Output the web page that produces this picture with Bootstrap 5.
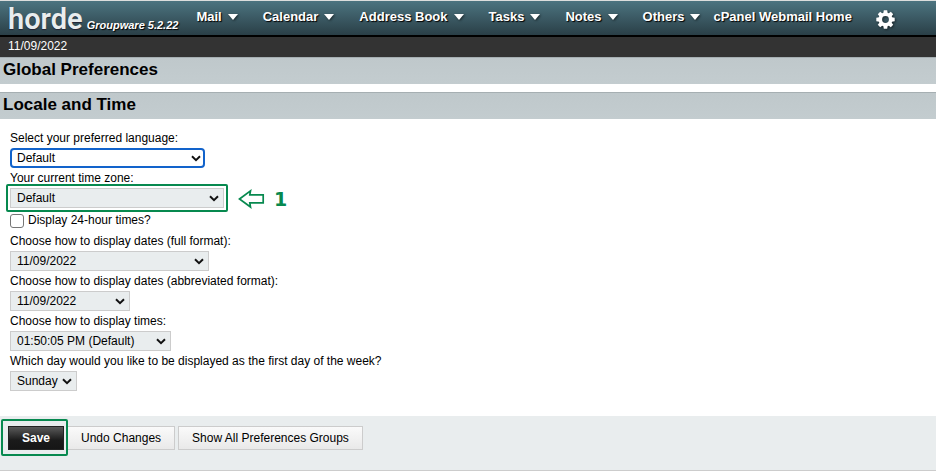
<!DOCTYPE html>
<html lang="en">
<head>
<meta charset="utf-8">
<meta name="viewport" content="width=device-width, initial-scale=1">
<title>Global Preferences</title>
<link href="https://cdn.jsdelivr.net/npm/bootstrap@5.3.0/dist/css/bootstrap.min.css" rel="stylesheet">
<style>
  body { font: 12px/20px "Liberation Sans", Arial, sans-serif; color: #000; background: #fff; }
  .topbar { height: 37px; border-top: 1px solid #dcdedd; border-bottom: 2px solid #000; background: linear-gradient(#4c7480, #2a3f47); }
  .topbar a { color: #fff; text-decoration: none; text-shadow: 1px 1px 1px #000; }
  .topbar .brand-name { font: 600 29px/36px Roboto, sans-serif; color: #e9edee; text-shadow: 0 1px 1px #223; }
  .brand-version { font: italic bold 11px/14px "Liberation Sans", Arial, sans-serif; padding-top: 17px; margin-left: 4px; }
  .menu { margin-left: 18px; gap: 25px; font-weight: bold; font-size: 13px; line-height: 18px; padding-bottom: 2px; }
  .menu a { gap: 6px; }
  .menu svg, .gear { filter: drop-shadow(1px 1px 1px #0008); }
  .menu .home-link { margin-left: -12px; }
  .menu .gear-link { margin-left: -2px; }
  .datebar { background: #333; color: #fff; height: 20px; padding-left: 8px; line-height: 18px; }
  .section-title { font-size: 17px; font-weight: bold; line-height: 24px; margin: 0 0 8px; padding: 0 3px 2px; background: linear-gradient(#bfc8cb, #c3cccf); border-top: 1px solid #a6afb2; }
  .prefs { padding: 1px 10px 25px; }
  .prefs .form-select { width: auto; height: 20px; padding: 0 16px 0 6px; font-size: 12px; line-height: 18px; color: #000; border: 1px solid #ccc; border-radius: 0; background-color: #e9edee;
    background-image: url("data:image/svg+xml,%3Csvg xmlns='http://www.w3.org/2000/svg' viewBox='0 0 10 7'%3E%3Cpath d='M1 1.3 5 5.1 9 1.3' fill='none' stroke='%23111' stroke-width='2'/%3E%3C/svg%3E");
    background-size: 10px 7px; background-position: right 4px center; }
  .prefs .form-select.is-active { border: 2px solid #1263cb; border-radius: 4px; background-color: #fff; padding-left: 5px; line-height: 16px; background-position: right 2px center; }
  .prefs .w-lang { width: 195px; }
  .prefs .w-zone { width: 214px; }
  .prefs .w-full { width: 199px; }
  .prefs .w-abbr { width: 120px; }
  .prefs .w-time { width: 161px; }
  .prefs .w-day { width: 67px; }
  .callout { position: relative; }
  .callout::after { content: ""; position: absolute; inset: -4px; border: 2px solid #07894f; border-radius: 2px; pointer-events: none; }
  .callout-save::after { inset: -7px -4px -6px -7px; z-index: 1; }
  .step { color: #07894f; height: 22px; margin: 0 0 -2px 14px; gap: 9px; font: bold 19px/22px "DejaVu Sans", sans-serif; }
  .check-row { height: 23px; line-height: 24px; }
  .prefs .form-check-input { width: 14px; height: 14px; margin: 6px 4px 0 0; border: 1px solid #767676; border-radius: 3px; }
  .actions { background: #e9edee; border-bottom: 1px solid #ccc; padding: 10px 8px 20px; gap: 3px; }
  .actions .btn { --bs-btn-padding-y: 0; --bs-btn-padding-x: 13px; --bs-btn-font-size: 12px; --bs-btn-line-height: 22px; --bs-btn-border-radius: 0; --bs-btn-color: #000; --bs-btn-border-color: #ccc; background-image: linear-gradient(#fafafa, #e9e9e9); }
  .actions .btn-save { --bs-btn-color: #fff; --bs-btn-border-color: #222; --bs-btn-font-weight: bold; background-image: linear-gradient(#5a5a5a, #1b1b1b 60%, #161616); }
</style>
<script src="https://cdn.jsdelivr.net/npm/bootstrap@5.3.0/dist/js/bootstrap.bundle.min.js"></script>
</head>
<body>
<header>
  <nav class="topbar d-flex ps-2" aria-label="Applications">
    <a class="d-flex" href="#"><span class="brand-name">horde</span><span class="brand-version">Groupware 5.2.22</span></a>
    <div class="menu d-flex align-items-center text-nowrap">
      <a class="d-flex align-items-center" href="#">Mail <svg width="10" height="6"><path d="M0 0h10L5 6z" fill="#fff"/></svg></a>
      <a class="d-flex align-items-center" href="#">Calendar <svg width="10" height="6"><path d="M0 0h10L5 6z" fill="#fff"/></svg></a>
      <a class="d-flex align-items-center" href="#">Address Book <svg width="10" height="6"><path d="M0 0h10L5 6z" fill="#fff"/></svg></a>
      <a class="d-flex align-items-center" href="#">Tasks <svg width="10" height="6"><path d="M0 0h10L5 6z" fill="#fff"/></svg></a>
      <a class="d-flex align-items-center" href="#">Notes <svg width="10" height="6"><path d="M0 0h10L5 6z" fill="#fff"/></svg></a>
      <a class="d-flex align-items-center" href="#">Others <svg width="10" height="6"><path d="M0 0h10L5 6z" fill="#fff"/></svg></a>
      <a class="home-link" href="#">cPanel Webmail Home</a>
      <a class="gear-link d-flex pt-1" href="#" aria-label="Settings">
        <svg class="gear" width="20" height="19" viewBox="-10.5 -9.5 20 19"><circle r="5.2" fill="none" stroke="#fff" stroke-width="3.6"/><g fill="#fff"><path id="tooth" d="M-2.2-6 -1.7-9.2H1.7L2.2-6z"/><use href="#tooth" transform="rotate(45)"/><use href="#tooth" transform="rotate(90)"/><use href="#tooth" transform="rotate(135)"/><use href="#tooth" transform="rotate(180)"/><use href="#tooth" transform="rotate(225)"/><use href="#tooth" transform="rotate(270)"/><use href="#tooth" transform="rotate(315)"/></g></svg>
      </a>
    </div>
  </nav>
  <div class="datebar">11/09/2022</div>
</header>
<main>
  <h1 class="section-title">Global Preferences</h1>
  <form>
    <h2 class="section-title">Locale and Time</h2>
    <div class="prefs">
      <label class="d-block" for="lang">Select your preferred language:</label>
      <select class="form-select is-active w-lang" id="lang"><option>Default</option></select>
      <label class="d-block" for="zone">Your current time zone:</label>
      <div class="d-flex">
        <div class="callout"><select class="form-select w-zone" id="zone"><option>Default</option></select></div>
        <div class="step d-flex align-items-center">
          <svg width="27" height="20" viewBox="0 0 27 20" fill="none" stroke="#07894f" stroke-width="1.7" aria-hidden="true"><path d="M1.5 10 12.5 1.9 11.8 5.9H25.2V13.9H11.8L12.5 18z"/></svg>
          <span>1</span>
        </div>
      </div>
      <div class="check-row d-flex">
        <input class="form-check-input" type="checkbox" id="h24">
        <label for="h24">Display 24-hour times?</label>
      </div>
      <label class="d-block" for="full">Choose how to display dates (full format):</label>
      <select class="form-select w-full" id="full"><option>11/09/2022</option></select>
      <label class="d-block" for="abbr">Choose how to display dates (abbreviated format):</label>
      <select class="form-select w-abbr" id="abbr"><option>11/09/2022</option></select>
      <label class="d-block" for="time">Choose how to display times:</label>
      <select class="form-select w-time" id="time"><option>01:50:05 PM (Default)</option></select>
      <label class="d-block" for="day">Which day would you like to be displayed as the first day of the week?</label>
      <select class="form-select w-day" id="day"><option>Sunday</option></select>
    </div>
    <div class="actions d-flex">
      <div class="callout callout-save"><button class="btn btn-save" type="submit">Save</button></div>
      <button class="btn" type="reset">Undo Changes</button>
      <button class="btn" type="button">Show All Preferences Groups</button>
    </div>
  </form>
</main>
</body>
</html>
